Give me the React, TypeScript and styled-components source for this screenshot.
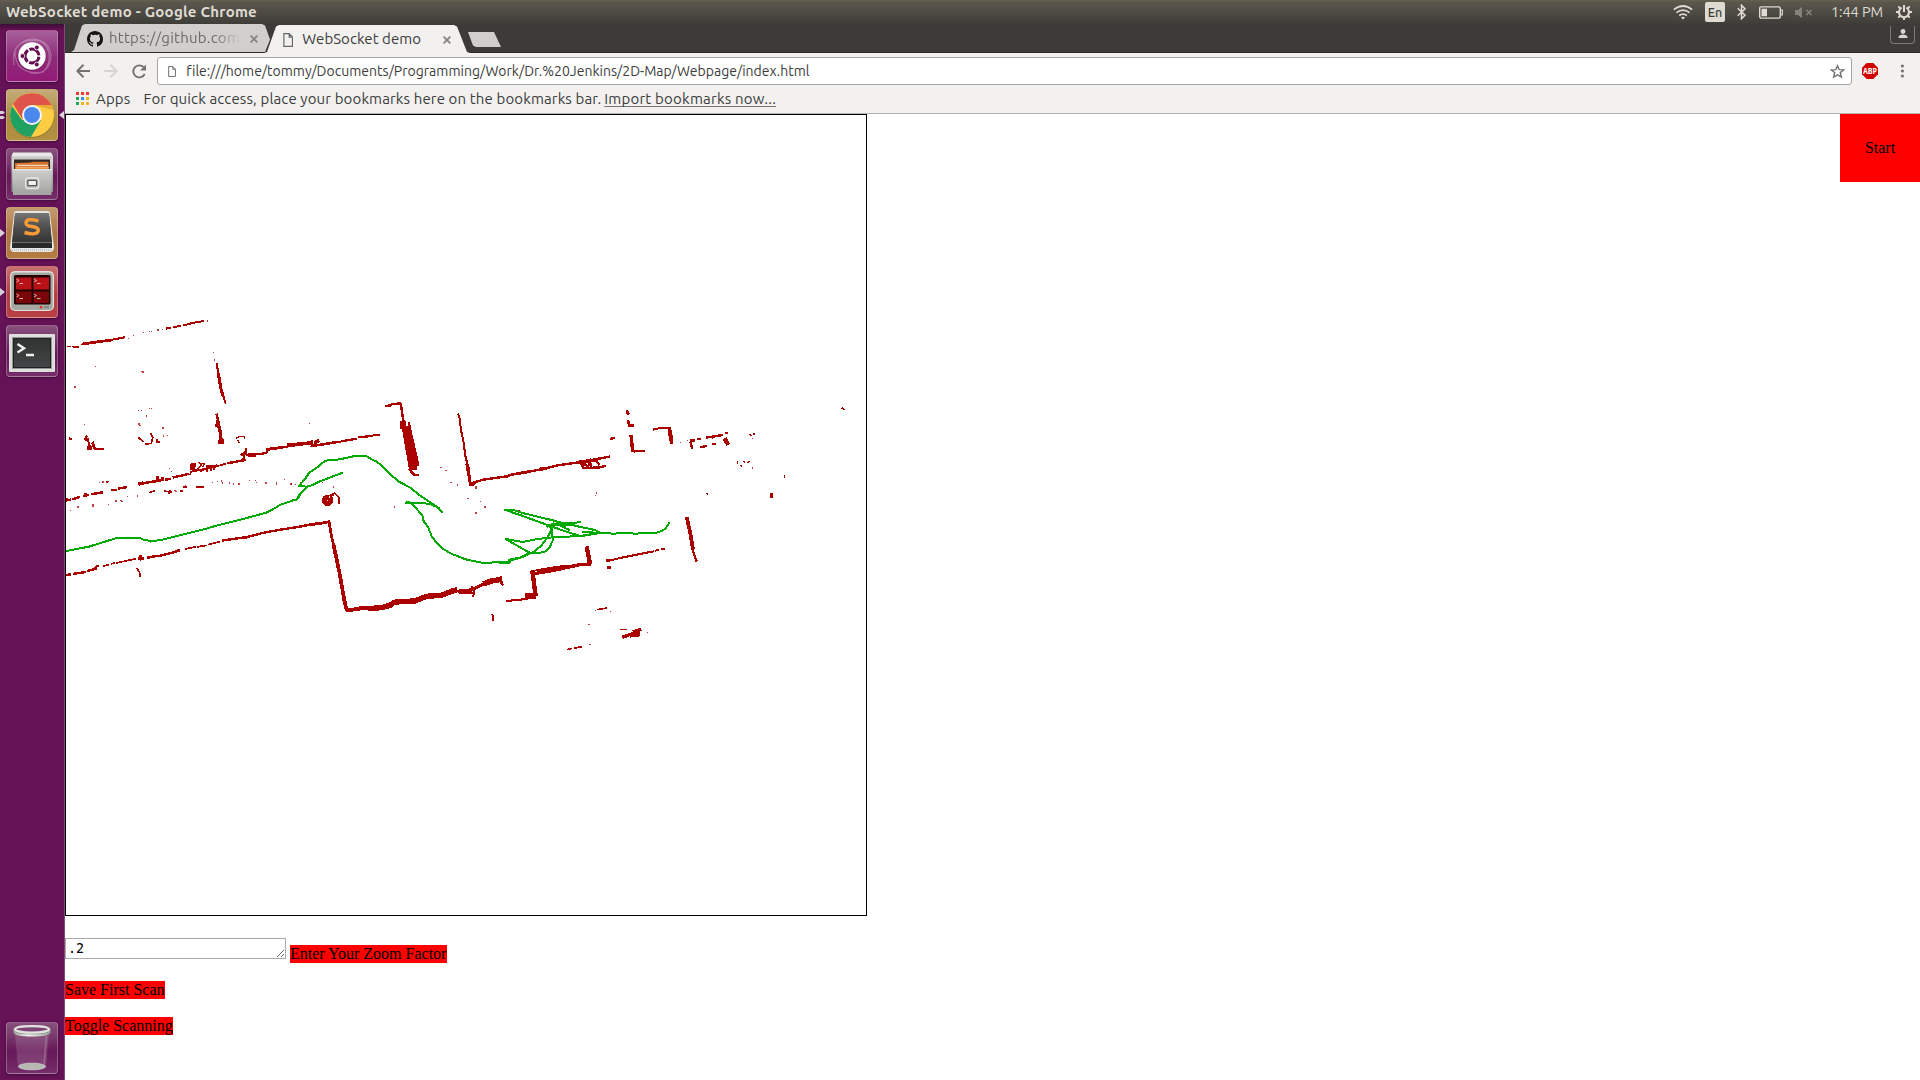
import React from "react";
import styled, { createGlobalStyle } from "styled-components";

const Global = createGlobalStyle`
  * { box-sizing: border-box; }
  html, body { margin: 0; height: 100%; overflow: hidden; background: #fff; }
  svg { display: block; flex: none; }
`;

const uiFont = `"Ubuntu", "Noto Sans", "Open Sans", sans-serif`;

const Desktop = styled.div`
  width: 1920px;
  height: 1080px;
  display: flex;
  flex-direction: column;
  background: #fff;
  font-family: ${uiFont};
`;
const Panel = styled.header`
  height: 24px;
  flex: none;
  display: flex;
  align-items: center;
  justify-content: space-between;
  padding: 0 8px 0 6px;
  background: linear-gradient(#65614f 0, #5b574e 2px, #3e3d39 100%);
  color: #dfdbd2;
`;
const Label = styled.span<{ size?: number; track?: number; color?: string; bold?: boolean; lift?: number }>`
  font-size: ${p => p.size ?? 14}px;
  letter-spacing: ${p => p.track ?? 0}px;
  color: ${p => p.color ?? "#3c3c3c"};
  font-weight: ${p => (p.bold ? 700 : 400)};
  margin-bottom: ${p => p.lift ?? 0}px;
  line-height: 18px;
  white-space: pre;
`;
const Indicators = styled.div`
  display: flex;
  align-items: center;
  height: 24px;
`;
const Gap = styled.i<{ w: number }>`
  width: ${p => p.w}px;
  flex: none;
`;
const Keyboard = styled.span`
  width: 20px;
  height: 20px;
  border-radius: 2px;
  background: #dfdbd2;
  color: #3c3b37;
  font-size: 12.5px;
  font-weight: 500;
  line-height: 20px;
  text-align: center;
`;
const Clock = styled.div`
  width: 54px;
  display: flex;
`;
const Workspace = styled.div`
  flex: 1;
  display: flex;
  min-height: 0;
`;
const Launcher = styled.nav`
  width: 65px;
  flex: none;
  border-right: 1px solid #804a78;
  background: linear-gradient(#3d0b33 0, #651256 6px, #651256 100%);
  display: flex;
  flex-direction: column;
  gap: 7px;
  padding: 6px 0;
`;
const Slot = styled.div<{ last?: boolean }>`
  height: 52px;
  display: flex;
  align-items: center;
  margin-top: ${p => (p.last ? "auto" : "0")};
`;
const Pips = styled.div`
  width: 6px;
  height: 52px;
  display: flex;
  flex-direction: column;
  justify-content: center;
`;
const Tile = styled.div<{ bg: string; edge?: string }>`
  width: 52px;
  height: 52px;
  border-radius: 4px;
  border: 1px solid ${p => p.edge ?? "rgba(255,255,255,.25)"};
  background: ${p => p.bg};
  box-shadow: 0 1px 3px rgba(0, 0, 0, 0.35);
`;
const Browser = styled.main`
  flex: 1;
  min-width: 0;
  display: flex;
  flex-direction: column;
`;
const TabStrip = styled.div`
  height: 29px;
  flex: none;
  display: flex;
  align-items: flex-end;
  justify-content: space-between;
  background: #3c3b37;
  border-bottom: 1px solid #2b2a27;
  padding: 0 5px 0 6px;
`;
const Tabs = styled.div`
  display: flex;
  align-items: flex-end;
`;
const Tab = styled.div<{ active?: boolean }>`
  width: ${p => (p.active ? 206 : 207)}px;
  height: 28px;
  margin-left: ${p => (p.active ? -14 : 0)}px;
  margin-bottom: ${p => (p.active ? -1 : 0)}px;
  padding: 1px 15px 0 ${p => (p.active ? 19 : 16)}px;
  display: flex;
  align-items: center;
  background: ${p => (p.active ? "#f2f1f0" : "#d0cfcd")};
  clip-path: ${p =>
    p.active
      ? "polygon(0 100%, 3px 96%, 12px 5%, 15px 0, 190px 0, 193px 5%, 203px 96%, 206px 100%)"
      : "polygon(0 100%, 3px 93%, 11px 5%, 14px 0, 191px 0, 194px 5%, 199px 55%, 194px 100%)"};
`;
const TabTitle = styled.div<{ fade?: boolean; w: number }>`
  width: ${p => p.w}px;
  height: 18px;
  margin-bottom: 2px;
  display: flex;
  overflow: hidden;
  mask-image: ${p => (p.fade ? "linear-gradient(90deg,#000 80%,transparent)" : "none")};
`;
const NewTab = styled.div`
  width: 33px;
  height: 15px;
  margin: 0 0 5px -2px;
  background: #d0cfcd;
  clip-path: polygon(0 0, 26px 0, 33px 100%, 8px 100%, 5px 90%);
`;
const Profile = styled.div`
  width: 25px;
  height: 18px;
  margin-bottom: 8px;
  border: 1px solid #7a7974;
  border-top: 0;
  border-radius: 0 0 4px 4px;
  display: flex;
  justify-content: center;
  padding-top: 3px;
`;
const Toolbar = styled.div`
  height: 35px;
  flex: none;
  display: flex;
  align-items: center;
  padding: 4px 13px 3px 11px;
  background: #f2f1f0;
`;
const Omnibox = styled.div`
  height: 28px;
  flex: 1;
  display: flex;
  align-items: center;
  border: 1px solid #a6a5a4;
  border-radius: 3px;
  background: #fff;
  padding: 0 6px 0 10px;
`;
const Fill = styled.span`
  flex: 1;
`;
const Bookmarks = styled.div`
  height: 26px;
  flex: none;
  display: flex;
  align-items: center;
  padding: 0 11px 4px;
  background: #f2f1f0;
  border-bottom: 1px solid #b3b2b1;
`;
const AppsGrid = styled.div`
  display: grid;
  grid-template-columns: repeat(3, 3px);
  gap: 2px;
`;
const Cell = styled.i<{ c: string }>`
  width: 3px;
  height: 3px;
  background: ${p => p.c};
`;
const ImportLink = styled.a`
  font-size: 15px;
  letter-spacing: 0.22px;
  line-height: 18px;
  color: #3c3c3c;
  white-space: pre;
  text-decoration: underline 1px #777;
  text-underline-offset: 2px;
  text-decoration-skip-ink: none;
`;
const Page = styled.section`
  flex: 1;
  display: flex;
  justify-content: space-between;
  align-items: flex-start;
  font: 16px/18px "Liberation Serif", "Times New Roman", serif;
  color: #000;
`;
const Column = styled.div`
  display: flex;
  flex-direction: column;
  align-items: flex-start;
  gap: 18px;
`;
const MapFrame = styled.div`
  width: 802px;
  height: 802px;
  border: 1px solid #000;
  margin-bottom: 4px;
`;
const ZoomRow = styled.div`
  display: flex;
  align-items: flex-start;
  gap: 4px;
  height: 25px;
`;
const ZoomInput = styled.textarea`
  width: 221px;
  height: 21px;
  margin: 0;
  padding: 2px;
  border: 1px solid #a9a9a9;
  border-radius: 0;
  outline: 0;
  overflow: hidden;
  font: 13.33px/15px "DejaVu Sans Mono", monospace;
  color: #000;
  background: #fff;
`;
const RedButton = styled.span<{ drop?: number; width?: number }>`
  height: 18px;
  width: ${p => (p.width ? `${p.width}px` : "auto")};
  background: #f00;
  margin-top: ${p => p.drop ?? 0}px;
  white-space: nowrap;
`;
const StartButton = styled.div`
  width: 80px;
  height: 68px;
  padding: 25px 0;
  text-align: center;
  background: #f00;
`;

type Stroke = [number, string];
interface Sector {
  x: number;
  y: number;
  walls: Stroke[];
  specks: string;
  track: string[];
}

/* Each sector is stored at three units per map pixel, from its own origin. */
const sectors: Sector[] = [
  {
    x: 64,
    y: 300,
    walls: [
      [4, "M9 139H20M24 139H46M52 134L62 126"],
      [7, "M28 140H44M56 131L105 124L146 119"],
      [5, "M140 119L182 111M305 85L322 82M326 81L352 76M356 75L378 71L380 69L420 62"],
      [5, "M458 188L463 222L470 262L485 310"],
      [8, "M463 220L470 262L478 290"],
      [6, "M457 340L462 360L472 422"],
      [9, "M460 358L470 400L471 430M466 420V431M474 417V430"],
      [5, "M454 370L457 380"],
      [5, "M69 405L63 417L73 420M70 412L80 450M74 434L72 450M78 434L82 448M86 424L94 447L119 446M14 414L24 417"],
      [8, "M86 428L92 446M75 437L77 446"],
      [4, "M222 411L239 425M260 398L266 412L262 429L243 432M275 425L287 426M280 417V426"],
      [3, "M516 414L528 408H542V416M520 419L527 428"],
      [5, "M547 444V464M529 464L540 460L538 479M533 464L545 454M547 464L607 459L610 449L665 440L690 435"],
      [9, "M552 464H575M688 434L722 430"],
      [6, "M582 462L607 458M605 447L660 440"],
      [6, "M4 600L20 598M24 597L48 590M58 587L74 583M80 582L116 576M141 570L160 569M163 565L190 560M222 552L270 543M270 544L300 538M303 538L322 536M326 532L376 520"],
      [9, "M5 599L12 598M64 578V590M224 551L238 548M280 528L281 544M290 536H300"],
      [4, "M378 523L382 514L460 498L485 490M490 489L545 479"],
      [6, "M425 500L458 496M500 487L545 479"],
      [12, "M386 490V510M382 495H397"],
      [4, "M403 485L412 494L400 508L412 512L425 505M415 488L408 499M421 489L417 500M430 495L428 514M440 500V513M450 500V509M396 505V516"],
      [4, "M256 577L272 571M300 572L323 576M320 568L314 580M348 573H356M358 560H368M396 561H420M125 545L136 543"],
      [6, "M4 825L20 822M26 821L65 815M69 812L90 807M88 808L98 798H104M94 802V808"],
      [4, "M117 797L134 794M141 791L154 787M157 788L217 775M362 746L395 740M398 740L430 735M432 733L468 724"],
      [6, "M248 771L290 766L325 757L347 750M474 721L500 717L545 711L600 697L650 688L722 677"],
      [8, "M228 764L234 780M223 775H240M249 772H258M343 747V754M543 708V716"],
      [4, "M218 803L226 815L229 830"],
    ],
    specks:
      "194,114 209,106 239,97 257,94 262,93 282,89 296,87 430,62 448,156 452,179 95,198 232,214 237,215 33,260 224,330 232,330 256,324 263,325 247,347 225,371 228,375 62,372 297,383 299,407 311,406 316,504 323,513 107,547 117,545 19,631 42,620 87,614 87,618 133,612 156,602 171,600 174,604 190,589 220,587 333,571 336,574 364,557 446,547 460,543 473,542 475,548 496,548 509,551 525,551 557,540 575,540 578,546 606,548 637,546 637,551 661,538 682,551 695,553 709,556 272,571",
    track: ["M4 753L28 748L75 739L155 714H205L228 713L238 718L250 720L260 724L300 717L420 687L465 674L530 658L604 638L625 628L650 613L700 596L706 584L720 568"],
  },
  {
    x: 290,
    y: 380,
    walls: [
      [9, "M-8 193L20 192L50 189L68 187M62 194L80 196M72 187L88 181"],
      [5, "M68 196L108 192L145 185L200 175M205 171L238 167L270 163M66 179V197M78 178V190"],
      [6, "M285 78L303 75L306 72L333 69M90 193L140 185M160 182L195 176M225 169L250 166"],
      [6, "M332 68L341 127L350 183L360 252"],
      [14, "M339 123L346 160L356 218L364 265M350 138L361 190L374 248V269M346 150L371 245"],
      [7, "M356 126L365 171L379 230L384 258M357 265L373 284H386M333 122L335 145"],
      [5, "M504 100L509 115L513 149L520 181L526 227L536 264L541 307"],
      [7, "M530 250L541 312H549L562 302"],
      [6, "M536 311L580 298L650 288L675 281L722 272"],
      [6, "M0 444L40 437L70 431L115 425"],
      [7, "M65 433L105 427L117 424L124 465L145 560L160 650L172 694"],
      [10, "M130 490L148 575L163 660L170 690"],
      [10, "M170 691L215 683L270 685L330 663L375 664"],
      [15, "M235 685L275 682L300 675L312 666L330 664L375 662L402 651L410 648L455 645L480 635L500 629"],
      [9, "M170 691L215 685M505 633L545 629L575 614L632 598"],
      [15, "M485 632L502 628M580 611L606 601L632 598"],
      [5, "M508 637H550M632 588V605L639 616M545 618L553 635L549 650"],
      [4, "M127 342L134 338L146 350V371M120 343L132 346"],
      [17, "M105 360a8 8 0 1 0 16 0a8 8 0 1 0 -16 0"],
      [5, "M607 700L610 722"],
    ],
    specks:
      "59,130 452,261 454,262 468,271 483,306 534,355 572,364 585,380 558,398 503,314 314,380 131,320 3,311 30,313 34,310 558,325 558,320 687,391 98,307 33,307",
    track: [
      "M0 362L22 357L27 351L34 336L54 318L68 314L83 306L158 277",
      "M53 320L28 316L45 296L57 278L83 260L106 241L150 237L190 228H230L245 237L258 243L275 255L300 281L325 303L362 323L388 344L438 378L458 398L445 382L420 371L383 367L345 367L358 365L370 375L397 405L401 423L415 442L425 468L440 488L458 505L485 521L530 538L580 548L655 544L658 538L690 532L722 517",
    ],
  },
  {
    x: 500,
    y: 390,
    walls: [
      [6, "M0 261L20 259L28 254L70 248L112 239L134 235L175 225L235 216L330 199"],
      [9, "M235 216L290 208M120 237L140 234"],
      [6, "M242 216L251 234L300 231L318 226M248 218L264 229L270 214L273 230M290 212L298 224"],
      [6, "M381 59L384 73M378 65L388 71M330 147L344 142"],
      [7, "M384 90L388 105H402"],
      [9, "M393 135L398 184M399 184L402 181"],
      [5, "M402 182H436M459 118L477 114H512"],
      [8, "M508 112L512 149L517 161"],
      [11, "M510 119L513 150"],
      [6, "M560 381L569 425L580 485L590 514"],
      [10, "M561 383L571 430L579 478"],
      [5, "M322 512L375 500L430 489L463 483M466 481L477 479M484 477L494 475"],
      [10, "M324 507V516M326 528V537"],
      [12, "M260 468L270 521"],
      [9, "M98 551L160 540L245 522L274 522"],
      [4, "M92 543L165 530L200 526M118 542L215 526M95 549L170 535"],
      [12, "M97 542L107 617"],
      [16, "M76 618H108"],
      [5, "M18 632L55 629L83 625"],
      [4, "M0 560L9 585M292 658L322 653M360 718H382M201 778L216 774M222 773L245 770"],
      [9, "M367 741L400 729L423 717M390 737L420 733"],
      [15, "M399 728L418 722"],
    ],
    specks: "289,308 287,316 58,362 286,660 332,664 267,703 270,762 443,727 320,654",
    track: [
      "M-2 517H28L32 510L70 500L102 484L125 465L145 437L155 415L144 403L184 405L195 398H225L242 394",
      "M13 358L42 360L75 370L150 388L205 402L284 419L297 425L245 438L210 428L145 405L68 377L13 358M16 446L68 455L108 447L145 442L240 437L292 430L245 424L284 427M16 446L92 489H115L138 483L150 470L158 450L155 410L170 398L195 406L225 400M140 410L164 398M150 405L170 401L210 420",
      "M284 428L345 430L365 427L405 430L470 427L487 421L497 414L506 401V394",
    ],
  },
  {
    x: 680,
    y: 390,
    walls: [
      [6, "M78 142L99 139L128 134M59 171L80 167M31 153L37 176M30 151H46M51 147H62M97 162H107M135 129H143"],
      [12, "M134 144L145 164"],
      [3, "M98 138V146M208 132L216 136M222 129V134M173 213V222M191 211L194 217M182 223L187 229M203 218L208 211M484 56L488 53L493 59M80 307L82 313M314 253V262"],
      [9, "M275 308V324M21 380V390"],
    ],
    specks: "2,156 23,150 217,144 217,233 183,225",
    track: [],
  },
];

const ScanMap = () => (
  <svg width="800" height="800" viewBox="66 115 800 800" fill="none" shapeRendering="crispEdges">
    {sectors.map(s => (
      <g key={`${s.x}-${s.y}`} transform={`translate(${s.x} ${s.y + 0.3}) scale(.33333)`}>
        {s.walls.map(([w, d], i) => (
          <path key={i} d={d} stroke="#a00" strokeWidth={w + 1.2} />
        ))}
        {s.specks.split(" ").map((p, i) => {
          const [x, y] = p.split(",").map(Number);
          return <rect key={i} x={x - 2} y={y - 2} width="4" height="4" fill="#a00" opacity=".75" />;
        })}
        {s.track.map((d, i) => (
          <path key={i} d={d} stroke="#0a0" strokeWidth="6" />
        ))}
      </g>
    ))}
    <circle cx="329.5" cy="497" r="1" fill="#fff" />
  </svg>
);

const Wifi = () => (
  <svg width="20" height="15" viewBox="0 0 20 15" fill="none" stroke="#dfdbd2" strokeWidth="1.7">
    <path d="M.8 4.7Q10-2.7 19.2 4.7M3.5 7.7Q10 2.6 16.5 7.7M6.2 10.5Q10 7.6 13.8 10.5" />
    <path d="M8 12.4Q10 11 12 12.4L10 14.5Z" fill="#dfdbd2" stroke="none" />
  </svg>
);
const Bluetooth = () => (
  <svg width="9" height="16" viewBox="0 0 9 16" fill="none" stroke="#dfdbd2" strokeWidth="1.5">
    <path d="M.7 4.2L8 11.2L4.5 14.8V1.2L8 4.8L.7 11.8" />
  </svg>
);
const Battery = () => (
  <svg width="24" height="13" viewBox="0 0 24 13" fill="none" stroke="#dfdbd2">
    <rect x=".7" y=".9" width="20.6" height="11.2" rx="1.5" strokeWidth="1.4" />
    <path d="M22 4H23.3V9H22" strokeWidth="1.2" />
    <path d="M2.5 2.7H8V10.3H2.5Z" fill="#dfdbd2" stroke="none" />
  </svg>
);
const Muted = () => (
  <svg width="18" height="13" viewBox="0 0 18 13">
    <path d="M0 4H3L7 .8V12.2L3 9H0Z" fill="#85827a" />
    <path d="M11.5 4L16.5 9M16.5 4L11.5 9" stroke="#85827a" strokeWidth="1.6" />
  </svg>
);
const Session = () => (
  <svg width="16" height="16" viewBox="0 0 16 16" fill="none" stroke="#dfdbd2">
    <path d="M5.7 3.7A5 5 0 1 0 10.3 3.7" strokeWidth="2" />
    <path d="M8 1V8" strokeWidth="2" />
    <path d="M8 13V16M0 8H3M13 8H16M2.3 2.3L4.5 4.5M13.7 2.3L11.5 4.5M2.3 13.7L4.5 11.5M13.7 13.7L11.5 11.5" strokeWidth="1.9" />
  </svg>
);
const GitHubMark = () => (
  <svg width="16" height="16" viewBox="0 0 16 16">
    <path
      fill="#161514"
      d="M8 0C3.58 0 0 3.58 0 8c0 3.54 2.29 6.53 5.47 7.59.4.07.55-.17.55-.38v-1.49c-2.01.37-2.53-.49-2.69-.94-.09-.23-.48-.94-.82-1.13-.28-.15-.68-.52-.01-.53.63-.01 1.08.58 1.23.82.72 1.21 1.87.87 2.33.66.07-.52.28-.87.51-1.07-1.78-.2-3.64-.89-3.64-3.95 0-.87.31-1.59.82-2.15-.08-.2-.36-1.02.08-2.12 0 0 .67-.21 2.2.82A7.7 7.7 0 0 1 8 3.86c.68 0 1.36.09 2 .27 1.53-1.04 2.2-.82 2.2-.82.44 1.1.16 1.92.08 2.12.51.56.82 1.27.82 2.15 0 3.07-1.87 3.75-3.65 3.95.29.25.54.73.54 1.48v2.2c0 .21.15.46.55.38A8 8 0 0 0 16 8c0-4.42-3.58-8-8-8Z"
    />
  </svg>
);
const Doc = ({ h }: { h: number }) => (
  <svg width={h * 0.74} height={h} viewBox="0 0 10 14" fill="none" stroke="#666" strokeWidth="1.2">
    <path d="M.7 .7H6L9.3 4V13.3H.7ZM6 .7V4.2H9.3" />
  </svg>
);
const Close = () => (
  <svg width="8" height="8" viewBox="0 0 8 8" stroke="#858483" strokeWidth="1.8">
    <path d="M.6 .6L7.4 7.4M7.4 .6L.6 7.4" />
  </svg>
);
const Arrow = ({ forward }: { forward?: boolean }) => (
  <svg width="14" height="14" viewBox="0 0 14 14" fill="none" stroke={forward ? "#d5d4d3" : "#747372"} strokeWidth="2">
    <path d={forward ? "M0 7H12.5M6.5 .8L12.7 7L6.5 13.2" : "M14 7H1.5M7.5 .8L1.3 7L7.5 13.2"} />
  </svg>
);
const Reload = () => (
  <svg width="15" height="15" viewBox="0 0 15 15">
    <path d="M12.7 10A6 6 0 1 1 11.6 3.2" fill="none" stroke="#747372" strokeWidth="1.9" />
    <path d="M14 .5V6.5H8Z" fill="#747372" />
  </svg>
);
const Star = () => (
  <svg width="15" height="15" viewBox="0 0 16 16" fill="none" stroke="#757473" strokeWidth="1.5">
    <path d="M8 1.8L9.8 6L14.5 6.3L10.9 9.3L12.1 14L8 11.5L3.9 14L5.1 9.3L1.5 6.3L6.2 6Z" />
  </svg>
);
const AdBlock = () => (
  <svg width="16" height="16" viewBox="0 0 16 16">
    <path d="M4.7 0H11.3L16 4.7V11.3L11.3 16H4.7L0 11.3V4.7Z" fill="#d00000" />
    <text x="8" y="10.9" fontSize="8" fontWeight="700" fill="#fff" textAnchor="middle" textLength="14" lengthAdjust="spacingAndGlyphs" fontFamily="Open Sans, sans-serif">
      ABP
    </text>
  </svg>
);
const Menu = () => (
  <svg width="4" height="14" viewBox="0 0 4 14" fill="#747372">
    <circle cx="2.4" cy="2" r="1.6" />
    <circle cx="2.4" cy="7" r="1.6" />
    <circle cx="2.4" cy="12" r="1.6" />
  </svg>
);
const Person = () => (
  <svg width="10" height="10" viewBox="0 0 10 10" fill="#d6d5d2">
    <circle cx="5" cy="2.5" r="2.4" />
    <path d="M.5 9V7.5Q2 5.6 5 5.6Q8 5.6 9.5 7.5V9Z" />
  </svg>
);
const Pip = ({ count }: { count: number }) => (
  <svg width="5" height="10" viewBox="0 0 5 10" fill="#d8d0d8">
    {count === 1 ? <path d="M0 1L5 5L0 9Z" /> : <path d="M0 1H3L5 2.5L3 4H0ZM0 6H3L5 7.5L3 9H0Z" />}
  </svg>
);

const UbuntuArt = () => (
  <svg width="50" height="50" viewBox="1 1 50 50">
    <g fill="none" stroke="#fff" strokeOpacity=".28" strokeWidth="1.2">
      <path d="M8 35C5 17 15 8 34 11C45 17 46 32 38 41M14 14C25 5 43 9 45 25C45 39 36 45 24 43M38 42C19 45 8 37 9 20" />
    </g>
    <circle cx="26" cy="27" r="14" fill="#340b2c" opacity=".3" />
    <circle cx="26" cy="26" r="13.7" fill="#fff" />
    <circle cx="26" cy="26" r="7" fill="none" stroke="#630d4e" strokeWidth="3" strokeDasharray="13 1.66" strokeDashoffset="-.8" />
    <g fill="#630d4e" stroke="#fff" strokeWidth=".8">
      <circle cx="16.5" cy="26" r="2.4" />
      <circle cx="30.8" cy="17.5" r="2.4" />
      <circle cx="30.8" cy="34.5" r="2.4" />
    </g>
  </svg>
);
const ChromeArt = () => (
  <svg width="50" height="50" viewBox="1 1 50 50">
    <circle cx="26" cy="27" r="22" fill="#5d4612" opacity=".4" />
    <circle cx="26" cy="26" r="22" fill="#ffcd43" />
    <path d="M6 17A22 22 0 0 0 25 48L35 31L16 31Z" fill="#1fa162" />
    <path d="M7 15A22 22 0 0 1 45.5 16H26L17 31Z" fill="#df5348" />
    <path d="M27 16H46L47 21Z" fill="#d7942f" opacity=".6" />
    <circle cx="26" cy="26" r="10" fill="#f4f4f4" />
    <circle cx="26" cy="26" r="8" fill="#4b88ee" />
  </svg>
);
const FilesArt = () => (
  <svg width="50" height="50" viewBox="1 1 50 50">
    <defs>
      <linearGradient id="steel" x2="0" y2="1">
        <stop stopColor="#cfcfcd" />
        <stop offset="1" stopColor="#a2a2a0" />
      </linearGradient>
      <linearGradient id="lid" x2="0" y2="1">
        <stop stopColor="#ededeb" />
        <stop offset="1" stopColor="#8a8a88" />
      </linearGradient>
    </defs>
    <path d="M7 4.5H45L47 8V44H5.5V8Z" fill="url(#lid)" />
    <path d="M6 8.5H46.5V11.5H6Z" fill="#c9c9c7" />
    <path d="M8 11.5H44V21.5H8Z" fill="#2e2622" />
    <path d="M9 15L24 14.5L27 13.8H42.5V21.5H9Z" fill="#d5732f" />
    <path d="M11 17.3H42" stroke="#fff0dc" strokeWidth="1" />
    <path d="M10 19.6H43" stroke="#f0a863" strokeWidth="1.8" />
    <path d="M7 21.2H45.5V47H7Z" fill="url(#steel)" />
    <path d="M7 21.7H45.5" stroke="#f0f0ee" />
    <rect x="19.7" y="30" width="13" height="10.5" rx="2" fill="#b8b8b5" stroke="#e6e6e3" strokeWidth="1.3" />
    <rect x="21.8" y="32.3" width="8.8" height="5.4" rx="1" fill="#f2f2f2" stroke="#555" strokeWidth="1.3" />
  </svg>
);
const SublimeArt = () => (
  <svg width="50" height="50" viewBox="1 1 50 50">
    <defs>
      <linearGradient id="key" x2="0" y2="1">
        <stop stopColor="#777" />
        <stop offset=".45" stopColor="#515151" />
        <stop offset="1" stopColor="#353535" />
      </linearGradient>
    </defs>
    <path d="M8 6Q8 4 11 4H41Q44 4 44 6L48 40Q48 45 44 45H8Q4 45 4 40Z" fill="#e6e6e6" />
    <path d="M9 7H43L46 38V41H6V38Z" fill="#292929" />
    <path d="M9 6H43L46 35H6Z" fill="url(#key)" />
    <path d="M6.3 35.5H45.7" stroke="#808080" strokeWidth=".8" />
    <path d="M32.5 14Q20 10.5 20 16Q20 19 26 19.5Q33.5 20.5 32 24.5Q30 28.5 18.5 25.5" fill="none" stroke="#f89b35" strokeWidth="3.4" />
    <path d="M6 43H46" stroke="#aaa" strokeDasharray="1 1" />
  </svg>
);
const TerminatorArt = () => (
  <svg width="50" height="50" viewBox="1 1 50 50">
    <rect x="4" y="5" width="44" height="40" rx="5" fill="#e1e2df" />
    <rect x="5.2" y="6.5" width="41.6" height="37.5" rx="4" fill="#a6a8a2" />
    <rect x="8" y="9" width="36.5" height="29.5" rx="1.5" fill="#240303" />
    <path d="M10 11.5H25.5V23.5H10ZM27.5 11.5H43V23.5H27.5Z" fill="#b81216" />
    <path d="M10 25.5H25.5V37H10ZM27.5 25.5H43V37H27.5Z" fill="#7a0609" />
    <path d="M10.5 13L13 14.5L10.5 16M13.5 17.5H17M28 13L30.5 14.5L28 16M31 17.5H34.5M10.5 28L13 29.5L10.5 31M13.5 32.5H17M28 28L30.5 29.5L28 31M31 32.5H34.5" fill="none" stroke="#e4bfbd" strokeWidth=".9" />
    <circle cx="35" cy="41.2" r="1.2" fill="#f0211c" />
    <path d="M38 41.2H43" stroke="#858782" strokeWidth="2" />
  </svg>
);
const TerminalArt = () => (
  <svg width="50" height="50" viewBox="1 1 50 50">
    <defs>
      <linearGradient id="term" x2="0" y2="1">
        <stop stopColor="#303332" />
        <stop offset="1" stopColor="#434646" />
      </linearGradient>
    </defs>
    <rect x="3" y="9" width="46" height="38" rx="1" fill="#dededc" />
    <rect x="6.5" y="12.5" width="39" height="31" fill="#202322" stroke="#949692" />
    <rect x="8" y="14" width="36" height="28" fill="url(#term)" />
    <path d="M11.5 19L18 23.3L11.5 27.5M20 30H28" fill="none" stroke="#eee" strokeWidth="2.5" />
  </svg>
);
const TrashArt = () => (
  <svg width="50" height="50" viewBox="1 1 50 50">
    <defs>
      <linearGradient id="rim" x2="1" y2="0">
        <stop stopColor="#a4a6a2" />
        <stop offset=".4" stopColor="#f4f5f2" />
        <stop offset="1" stopColor="#9c9e9a" />
      </linearGradient>
    </defs>
    <path d="M9 12L12 45Q26 50 40 45L43 12Z" fill="#e6d3e3" opacity=".17" />
    <path d="M40.5 14L38 42" stroke="#fff" opacity=".2" strokeWidth="1.5" />
    <ellipse cx="26" cy="44.5" rx="13.5" ry="3.3" fill="#b4b7b2" stroke="#d0d3ce" strokeWidth=".8" />
    <path d="M7.5 7V10.5Q9 14.5 26 14.5T44.5 10.5V7Z" fill="url(#rim)" />
    <path d="M8 9.5Q12 12 26 12T44 9.5" fill="none" stroke="#868984" strokeWidth=".8" />
    <ellipse cx="26" cy="7.3" rx="17" ry="3.2" fill="#7c4374" stroke="#e2e4df" strokeWidth="2.2" />
  </svg>
);

const glass = "linear-gradient(#87507c 0, #793b6d 25%, #661858 55%, #752e69 100%)";
const apps = [
  { art: <UbuntuArt />, bg: "linear-gradient(#a76098, #8e2a79 55%, #951a77)", pips: 0 },
  { art: <ChromeArt />, bg: "linear-gradient(#c4aa79, #ad8c42 55%, #b19040)", pips: 2 },
  { art: <FilesArt />, bg: glass, pips: 0 },
  { art: <SublimeArt />, bg: "linear-gradient(#c3996f, #ae7641 55%, #b47b42)", pips: 1 },
  { art: <TerminatorArt />, bg: "linear-gradient(#c8706f, #b23f43 55%, #b94045)", pips: 1 },
  { art: <TerminalArt />, bg: glass, pips: 0 },
];
const gridColors = ["#ef3c32", "#ef3c32", "#ef3c32", "#27a45c", "#398bf0", "#f5b31b", "#27a45c", "#f5b31b", "#f5b31b"];

const ActiveMark = styled.svg`
  margin-left: 1px;
`;

export default function App() {
  return (
    <Desktop>
      <Global />
      <Panel>
        <Label bold size={15} color="#dfdbd2" track={0.25}>WebSocket demo - Google Chrome</Label>
        <Indicators>
          <Wifi /><Gap w={12} />
          <Keyboard>En</Keyboard><Gap w={12} />
          <Bluetooth /><Gap w={13} />
          <Battery /><Gap w={12} />
          <Muted /><Gap w={18} />
          <Clock><Label size={14.5} color="#dfdbd2" track={-0.1}>1:44 PM</Label></Clock><Gap w={11} />
          <Session />
        </Indicators>
      </Panel>
      <Workspace>
        <Launcher>
          {apps.map((a, i) => (
            <Slot key={i}>
              <Pips>{a.pips > 0 && <Pip count={a.pips} />}</Pips>
              <Tile bg={a.bg}>{a.art}</Tile>
              {i === 1 && (
                <ActiveMark width="5" height="8" viewBox="0 0 5 8">
                  <path d="M5 0V8L0 4Z" fill="#e1d8e0" />
                </ActiveMark>
              )}
            </Slot>
          ))}
          <Slot last>
            <Pips />
            <Tile bg={glass}><TrashArt /></Tile>
          </Slot>
        </Launcher>
        <Browser>
          <TabStrip>
            <Tabs>
              <Tab>
                <GitHubMark /><Gap w={6} />
                <TabTitle w={131} fade><Label size={15} track={0.25} color="#6c6b69">https://github.com</Label></TabTitle><Gap w={10} />
                <Close />
              </Tab>
              <Tab active>
                <Doc h={14} /><Gap w={9} />
                <TabTitle w={131}><Label size={15} track={0.05}>WebSocket demo</Label></TabTitle><Gap w={10} />
                <Close />
              </Tab>
              <NewTab />
            </Tabs>
            <Profile><Person /></Profile>
          </TabStrip>
          <Toolbar>
            <Arrow /><Gap w={14} />
            <Arrow forward /><Gap w={14} />
            <Reload /><Gap w={10} />
            <Omnibox>
              <Doc h={11} /><Gap w={10} />
              <Label size={14} track={0.015} lift={1}>file:///home/tommy/Documents/Programming/Work/Dr.%20Jenkins/2D-Map/Webpage/index.html</Label>
              <Fill />
              <Star />
            </Omnibox>
            <Gap w={10} /><AdBlock /><Gap w={22} /><Menu /><Gap w={3} />
          </Toolbar>
          <Bookmarks>
            <AppsGrid>{gridColors.map((c, i) => <Cell key={i} c={c} />)}</AppsGrid>
            <Gap w={7} />
            <Label size={15} track={0.15}>Apps</Label>
            <Gap w={13} />
            <Label size={15} track={0.13}>For quick access, place your bookmarks here on the bookmarks bar.</Label>
            <Gap w={3} />
            <ImportLink>Import bookmarks now...</ImportLink>
          </Bookmarks>
          <Page>
            <Column>
              <MapFrame><ScanMap /></MapFrame>
              <ZoomRow>
                <ZoomInput defaultValue=".2" spellCheck={false} />
                <RedButton drop={7} width={157}>Enter Your Zoom Factor</RedButton>
              </ZoomRow>
              <RedButton>Save First Scan</RedButton>
              <RedButton>Toggle Scanning</RedButton>
            </Column>
            <StartButton>Start</StartButton>
          </Page>
        </Browser>
      </Workspace>
    </Desktop>
  );
}
